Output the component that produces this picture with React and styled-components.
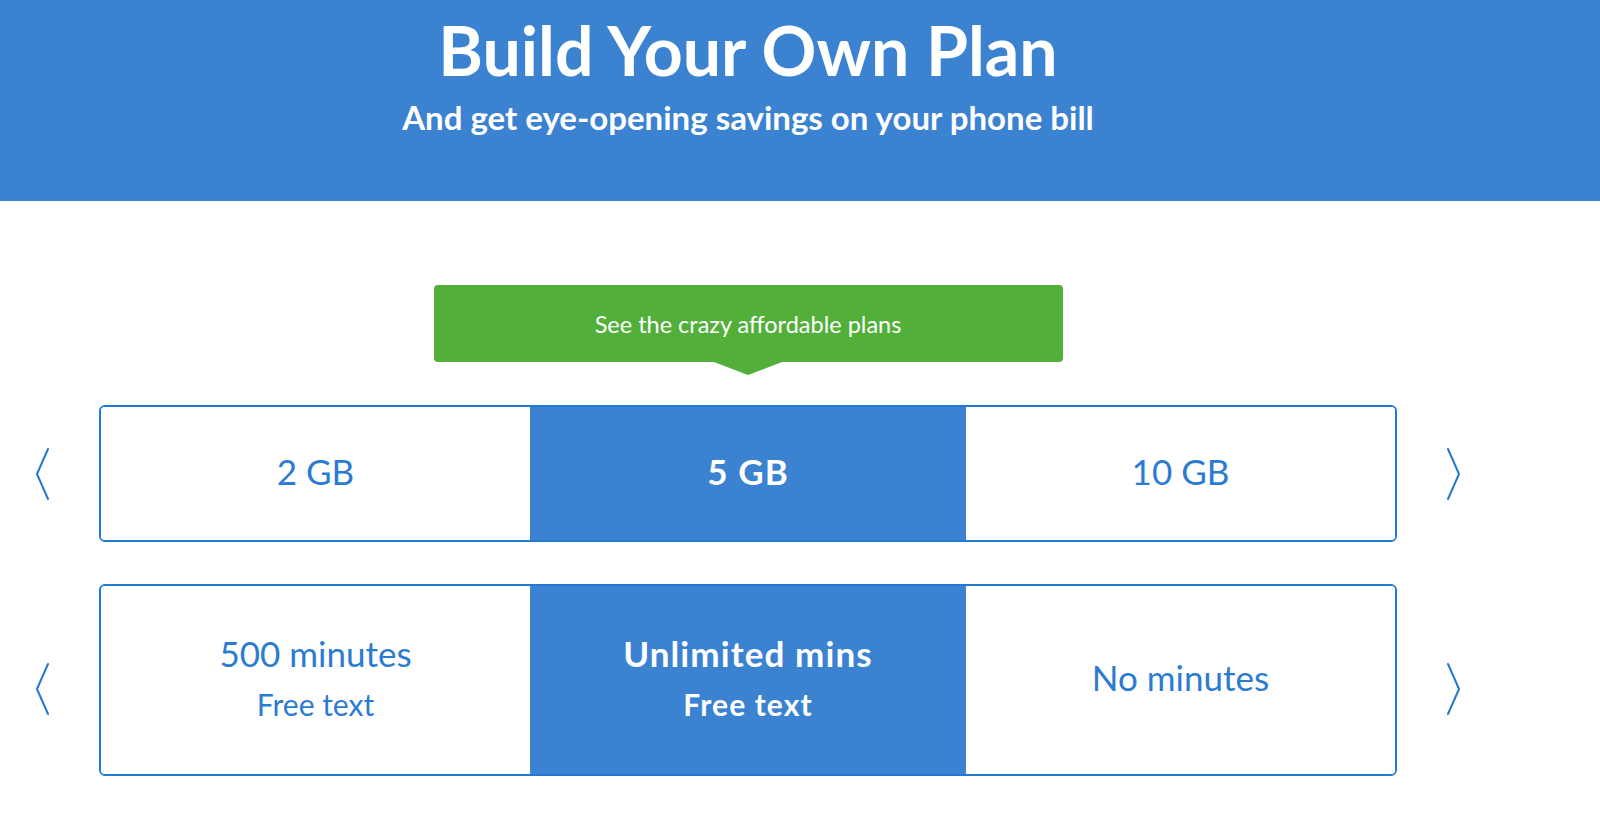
import React from 'react'
import styled, { createGlobalStyle } from 'styled-components'

const BLUE = '#3b82d1'
const LINE = '#2179d3'
const INK = '#2b7bd3'
const GREEN = '#52b03a'

const GlobalStyle = createGlobalStyle`
  html, body {
    margin: 0;
    padding: 0;
    background: #fff;
    font-family: Lato, "Open Sans", sans-serif;
  }
`

const data = [
    {
        height: 137,
        shift: 0,
        options: [
            { title: '2 GB' },
            { title: '5 GB', selected: true },
            { title: '10 GB' }
        ]
    },
    {
        height: 192,
        shift: 18,
        options: [
            { title: '500 minutes', sub: 'Free text' },
            { title: 'Unlimited mins', sub: 'Free text', selected: true },
            { title: 'No minutes' }
        ]
    }
]

const Chevron = ({ dir }) => (
    <svg width="15" height="54" viewBox="0 0 15 54" fill="none">
        {dir === 'left'
            ? <polyline points="13,2 2,27 13,52" stroke={LINE} strokeWidth="2" strokeLinecap="round" strokeLinejoin="round" />
            : <polyline points="2,2 13,27 2,52" stroke={LINE} strokeWidth="2" strokeLinecap="round" strokeLinejoin="round" />}
    </svg>
)

const App = () => {
    return (
        <>
            <GlobalStyle />
            <Header>
                <HeaderInner>
                    <Title>Build Your Own Plan</Title>
                    <Subtitle>And get eye-opening savings on your phone bill</Subtitle>
                </HeaderInner>
            </Header>
            <Main>
                <Callout>See the crazy affordable plans</Callout>
                {data.map((row, i) => (
                    <PickerRow key={i}>
                        <ArrowButton side="left" shift={row.shift}>
                            <Chevron dir="left" />
                        </ArrowButton>
                        <Options height={row.height}>
                            {row.options.map(opt => (
                                <Option key={opt.title} selected={opt.selected}>
                                    <OptionTitle>{opt.title}</OptionTitle>
                                    {opt.sub && <OptionSub>{opt.sub}</OptionSub>}
                                </Option>
                            ))}
                        </Options>
                        <ArrowButton side="right" shift={row.shift}>
                            <Chevron dir="right" />
                        </ArrowButton>
                    </PickerRow>
                ))}
            </Main>
        </>
    )
}

const Header = styled.header`
  background: ${BLUE};
  height: 201px;
`
const HeaderInner = styled.div`
  width: 1496px;
  padding-top: 16px;
  display: flex;
  flex-direction: column;
  align-items: center;
  color: #fff;
`
const Title = styled.h1`
  margin: 0;
  font-family: Lato, sans-serif;
  font-weight: 700;
  font-size: 68px;
  line-height: 1;
`
const Subtitle = styled.h2`
  margin: 17px 0 0;
  font-family: Lato, sans-serif;
  font-weight: 700;
  font-size: 33px;
  line-height: 1;
`
const Main = styled.main`
  width: 1496px;
  padding-top: 84px;
  display: flex;
  flex-direction: column;
  align-items: stretch;
  gap: 42px;
`
const Callout = styled.div`
  position: relative;
  align-self: center;
  width: 629px;
  height: 77px;
  margin-bottom: 1px;
  border-radius: 4px;
  background: ${GREEN};
  color: #fff;
  font-size: 23.5px;
  display: flex;
  align-items: center;
  justify-content: center;

  &::after {
    content: '';
    position: absolute;
    left: 50%;
    bottom: -13px;
    margin-left: -34px;
    border-left: 34px solid transparent;
    border-right: 34px solid transparent;
    border-top: 13px solid ${GREEN};
  }
`
const PickerRow = styled.div`
  display: grid;
  grid-template-columns: 99px 1fr 99px;
  align-items: center;
`
const ArrowButton = styled.button`
  background: none;
  border: 0;
  padding: 0;
  cursor: pointer;
  display: flex;
  justify-self: ${p => (p.side === 'left' ? 'start' : 'end')};
  margin: ${p => p.shift}px ${p => (p.side === 'right' ? 35 : 0)}px 0 ${p => (p.side === 'left' ? 35 : 0)}px;
`
const Options = styled.div`
  height: ${p => p.height}px;
  box-sizing: border-box;
  border: 2px solid ${LINE};
  border-radius: 6px;
  overflow: hidden;
  display: grid;
  grid-template-columns: 1fr 436px 1fr;
`
const Option = styled.div`
  display: flex;
  flex-direction: column;
  align-items: center;
  justify-content: center;
  gap: 12px;
  padding-bottom: 6px;
  background: ${p => (p.selected ? BLUE : '#fff')};
  color: ${p => (p.selected ? '#fff' : INK)};
  font-weight: ${p => (p.selected ? 700 : 400)};
  letter-spacing: ${p => (p.selected ? '1.1px' : '0')};
`
const OptionTitle = styled.div`
  font-size: 35px;
  line-height: 42px;
`
const OptionSub = styled.div`
  font-size: 30px;
  line-height: 36px;
`

export default App
